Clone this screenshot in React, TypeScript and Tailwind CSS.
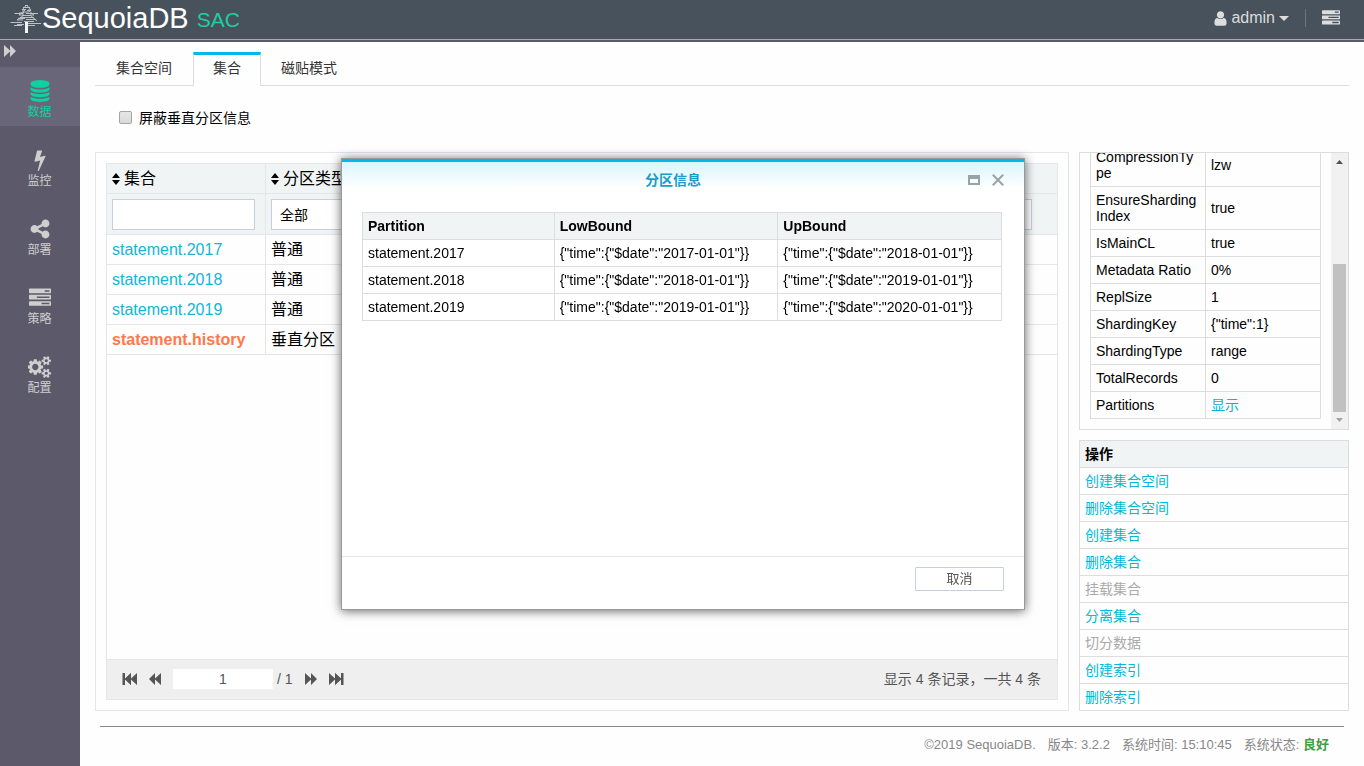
import { useLayoutEffect, useRef, type ReactNode } from "react";

const ICONS = {
  database: {
    w: 1792,
    d: "M896 768q237 0 443-43t325-127v170q0 69-103 128t-280 93.5-385 34.5-385-34.5-280-93.5-103-128v-170q119 84 325 127t443 43zm0 768q237 0 443-43t325-127v170q0 69-103 128t-280 93.5-385 34.5-385-34.5-280-93.5-103-128v-170q119 84 325 127t443 43zm0-384q237 0 443-43t325-127v170q0 69-103 128t-280 93.5-385 34.5-385-34.5-280-93.5-103-128v-170q119 84 325 127t443 43zm0-1152q208 0 385 34.5t280 93.5 103 128v128q0 69-103 128t-280 93.5-385 34.5-385-34.5-280-93.5-103-128v-128q0-69 103-128t280-93.5 385-34.5z",
  },
  bolt: {
    w: 1792,
    d: "M1333 566q18 20 7 44l-540 1157q-13 25-42 25-4 0-14-2-17-5-25.5-19t-4.5-30l197-808-406 101q-4 1-12 1-18 0-31-11-18-15-13-39l201-825q4-14 16-23t28-9h328q19 0 32 12.5t13 29.5q0 8-5 18l-171 463 396-98q8-2 12-2 19 0 34 15z",
  },
  share: {
    w: 1792,
    d: "M1344 1024q133 0 226.5 93.5t93.5 226.5-93.5 226.5-226.5 93.5-226.5-93.5-93.5-226.5q0-12 2-34l-360-180q-92 86-218 86-133 0-226.5-93.5t-93.5-226.5 93.5-226.5 226.5-93.5q126 0 218 86l360-180q-2-22-2-34 0-133 93.5-226.5t226.5-93.5 226.5 93.5 93.5 226.5-93.5 226.5-226.5 93.5q-126 0-218-86l-360 180q2 22 2 34t-2 34l360 180q92-86 218-86z",
  },
  tasks: {
    w: 1792,
    d: "M1024 1408h640v-128h-640v128zm-384-512h1024v-128h-1024v128zm640-512h384v-128h-384v128zm512 832v256q0 26-19 45t-45 19h-1664q-26 0-45-19t-19-45v-256q0-26 19-45t45-19h1664q26 0 45 19t19 45zm0-512v256q0 26-19 45t-45 19h-1664q-26 0-45-19t-19-45v-256q0-26 19-45t45-19h1664q26 0 45 19t19 45zm0-512v256q0 26-19 45t-45 19h-1664q-26 0-45-19t-19-45v-256q0-26 19-45t45-19h1664q26 0 45 19t19 45z",
  },
  cogs: {
    w: 1920,
    d: "M832 896q0-106-75-181t-181-75-181 75-75 181 75 181 181 75 181-75 75-181zm768 512q0-52-38-90t-90-38-90 38-38 90q0 53 37.5 90.5t90.5 37.5 90.5-37.5 37.5-90.5zm0-1024q0-52-38-90t-90-38-90 38-38 90q0 53 37.5 90.5t90.5 37.5 90.5-37.5 37.5-90.5zm-384 421v185q0 10-7 19.5t-16 10.5l-155 24q-11 35-32 76 34 48 90 115 7 11 7 20 0 12-7 19-23 30-82.5 89.5t-78.5 59.5q-11 0-21-7l-115-90q-37 19-77 31-11 108-23 155-7 24-30 24h-186q-11 0-20-7.5t-10-17.5l-23-153q-34-10-75-31l-118 89q-7 7-20 7-11 0-21-8-144-133-144-160 0-9 7-19 10-14 41-53t47-61q-23-44-35-82l-152-24q-10-1-17-9.5t-7-19.5v-185q0-10 7-19.5t16-10.5l155-24q11-35 32-76-34-48-90-115-7-11-7-20 0-12 7-20 22-30 82-89t79-59q11 0 21 7l115 90q34-18 77-32 11-108 23-154 7-24 30-24h186q11 0 20 7.5t10 17.5l23 153q34 10 75 31l118-89q8-7 20-7 11 0 21 8 144 133 144 160 0 8-7 19-12 16-42 54t-45 60q23 48 34 82l152 23q10 2 17 10.5t7 19.5zm640 533v140q0 16-149 31-12 27-30 52 51 113 51 138 0 4-4 7-122 71-124 71-8 0-46-47t-52-68q-20 2-30 2t-30-2q-14 21-52 68t-46 47q-2 0-124-71-4-3-4-7 0-25 51-138-18-25-30-52-149-15-149-31v-140q0-16 149-31 13-29 30-52-51-113-51-138 0-4 4-7 4-2 35-20t59-34 30-16q8 0 46 46.5t52 67.5q20-2 30-2t30 2q51-71 92-112l6-2q4 0 124 70 4 3 4 7 0 25-51 138 17 23 30 52 149 15 149 31zm0-1024v140q0 16-149 31-12 27-30 52 51 113 51 138 0 4-4 7-122 71-124 71-8 0-46-47t-52-68q-20 2-30 2t-30-2q-14 21-52 68t-46 47q-2 0-124-71-4-3-4-7 0-25 51-138-18-25-30-52-149-15-149-31v-140q0-16 149-31 13-29 30-52-51-113-51-138 0-4 4-7 4-2 35-20t59-34 30-16q8 0 46 46.5t52 67.5q20-2 30-2t30 2q51-71 92-112l6-2q4 0 124 70 4 3 4 7 0 25-51 138 17 23 30 52 149 15 149 31z",
  },
  user: {
    w: 1792,
    d: "M1536 1399q0 109-62.5 187t-150.5 78h-854q-88 0-150.5-78t-62.5-187q0-85 8.5-160.5t31.5-152 58.5-131 94-89 134.5-34.5q131 128 313 128t313-128q76 0 134.5 34.5t94 89 58.5 131 31.5 152 8.5 160.5zm-256-887q0 159-112.5 271.5t-271.5 112.5-271.5-112.5-112.5-271.5 112.5-271.5 271.5-112.5 271.5 112.5 112.5 271.5z",
  },
};

function Icon({ name, className }: { name: keyof typeof ICONS; className: string }) {
  const { w, d } = ICONS[name];
  return (
    <svg viewBox={`0 0 ${w} 1792`} fill="currentColor" className={className} aria-hidden="true">
      <path d={d} />
    </svg>
  );
}

function Forward({ end = false, back = false, className = "h-3" }: { end?: boolean; back?: boolean; className?: string }) {
  return (
    <svg
      viewBox={end ? "0 0 15 12" : "0 0 12 12"}
      fill="currentColor"
      aria-hidden="true"
      className={`${className} ${back ? "-scale-x-100" : ""}`}
    >
      <path d="M0 0L6 5.6V0L12 6L6 12V6.4L0 12Z" />
      {end && <path d="M6 0L12 5.5V0H14.500V12H12V6.500L6 12Z" />}
    </svg>
  );
}

function Logo() {
  return (
    <svg viewBox="0 0 32 30" className="h-[30px] w-8" stroke="#bcc2c6" fill="none" aria-hidden="true">
      <path
        strokeWidth="1.2"
        d="M15 2.500H18M13 4.500H20M12 6.500H16M17 7.500H21M9 10H14M13 9H19M16 10.500H28M4.500 10.500H13M12 12.500H21M11 14.500H24M8 15.500H15M7 17H13M16 16.500H26M14 18.500H24M0.500 19.500H12M17 20.500H31M7 21.500H14M4 22.500H12M18 22.500H25"
      />
      <path strokeWidth="1" d="M16.500 2L12 7L15 7L9 12H14L7 17M16.500 2L21 7H18L24 12H20L27 18" />
      <path d="M16.500 19V30" stroke="#f4f4f4" strokeWidth="3" />
    </svg>
  );
}

function SortIcon() {
  return (
    <svg viewBox="0 0 8 12" className="h-3 w-2 shrink-0" aria-hidden="true">
      <path d="M4 0L8 5H0ZM4 12L0 7H8Z" />
    </svg>
  );
}

const nav: { icon: keyof typeof ICONS; label: string }[] = [
  { icon: "database", label: "数据" },
  { icon: "bolt", label: "监控" },
  { icon: "share", label: "部署" },
  { icon: "tasks", label: "策略" },
  { icon: "cogs", label: "配置" },
];

const collections = [
  ["statement.2017", "普通"],
  ["statement.2018", "普通"],
  ["statement.2019", "普通"],
  ["statement.history", "垂直分区"],
];

const details: [ReactNode, ReactNode][] = [
  [<>CompressionTy<wbr />pe</>, "lzw"],
  [<>EnsureSharding<wbr />Index</>, "true"],
  ["IsMainCL", "true"],
  ["Metadata Ratio", "0%"],
  ["ReplSize", "1"],
  ["ShardingKey", '{"time":1}'],
  ["ShardingType", "range"],
  ["TotalRecords", "0"],
  ["Partitions", <a href="#partitions" className="text-[#00b5d8]">显示</a>],
];

const actions: [string, boolean][] = [
  ["创建集合空间", true],
  ["删除集合空间", true],
  ["创建集合", true],
  ["删除集合", true],
  ["挂载集合", false],
  ["分离集合", true],
  ["切分数据", false],
  ["创建索引", true],
  ["删除索引", true],
];

const partitions = [2017, 2018, 2019].map((year) => [
  `statement.${year}`,
  `{"time":{"$date":"${year}-01-01"}}`,
  `{"time":{"$date":"${year + 1}-01-01"}}`,
]);

function Header() {
  return (
    <header className="flex h-[42px] shrink-0 items-center justify-between border-b-2 border-[#5b596a] bg-[#47525d] shadow-[inset_0_-1px_0_#a9a9b2]">
      <div className="flex items-center pb-1 pl-2.5">
        <Logo />
        <span className="text-[29px] leading-8 text-white">SequoiaDB</span>
        <span className="pl-2 pt-1 text-[21px] leading-8 text-[#1dcf9f]">SAC</span>
      </div>
      <div className="flex items-center pb-1 pr-6 text-[#dddddd]">
        <button type="button" className="flex items-center">
          <Icon name="user" className="mr-0.5 h-[17px] w-[17px]" />
          <span className="text-base leading-5">admin</span>
          <svg viewBox="0 0 10 5" fill="currentColor" className="ml-1 h-[5px] w-2.5" aria-hidden="true">
            <path d="M0 0H10L5 5Z" />
          </svg>
        </button>
        <span className="mx-4 h-[18px] w-px bg-[#6d7680]" />
        <button type="button" aria-label="任务">
          <Icon name="tasks" className="h-[18px] w-[18px]" />
        </button>
      </div>
    </header>
  );
}

function Sidebar() {
  return (
    <nav className="w-20 shrink-0 bg-[#5b596a] text-[#cfcfcf]">
      <button type="button" aria-label="展开" className="flex h-[25px] w-full items-start pl-1 pt-[3px]">
        <Forward className="h-3" />
      </button>
      <ul className="flex flex-col gap-2.5">
        {nav.map(({ icon, label }, i) => (
          <li key={label}>
            <a
              href={`#${icon}`}
              className={`flex h-[59px] flex-col items-center pt-[13px] pr-px text-xs leading-4 ${i === 0 ? "bg-[#686678] text-[#0fd0a0]" : ""}`}
            >
              <Icon name={icon} className={icon === "cogs" ? "h-[22px] w-6" : "h-[22px] w-[22px]"} />
              <span className="pt-0.5">{label}</span>
            </a>
          </li>
        ))}
      </ul>
    </nav>
  );
}

function Tabs() {
  const side = "border-b border-t-[3px] border-b-[#dddddd] border-t-transparent px-5";
  return (
    <div className="flex h-[34px] shrink-0 text-sm leading-[30px] text-[#333333]">
      <button type="button" className={`${side} w-[98px]`}>
        <span className="block pb-1 leading-[26px]">集合空间</span>
      </button>
      <button type="button" className="w-[68px] border-x border-t-[3px] border-x-[#dddddd] border-t-[#00b9e9]">
        <span className="block pb-[5px] leading-[26px]">集合</span>
      </button>
      <button type="button" className={side}>
        <span className="block pb-1 leading-[26px]">磁贴模式</span>
      </button>
      <div className="flex-1 border-b border-[#dddddd]" />
    </div>
  );
}

function CollectionPanel() {
  return (
    <section className="flex min-w-0 flex-1 flex-col border border-[#e3e7e8] p-2.5">
      <div className="flex min-h-0 flex-1 flex-col border border-[#e3e7e8]">
        <table className="w-full table-fixed border-separate border-spacing-0 text-base">
          <colgroup>
            <col className="w-[159px]" />
            <col />
          </colgroup>
          <thead className="bg-[#f0f4f5] text-left">
            <tr className="h-[30px]">
              {["集合", "分区类型"].map((title, i) => (
                <th key={title} className={`border-b border-[#e3e7e8] p-0 pl-[5px] font-normal ${i === 0 ? "border-r" : ""}`}>
                  <span className="flex items-center gap-1 leading-6">
                    <SortIcon />
                    {title}
                  </span>
                </th>
              ))}
            </tr>
            <tr className="h-[41px]">
              <td className="border-b border-r border-[#e3e7e8] p-0 pl-[5px] pr-2.5">
                <input aria-label="集合" className="block h-[31px] w-full border border-[#c5d0dc] bg-white px-2 text-sm" />
              </td>
              <td className="border-b border-[#e3e7e8] p-0 pl-[5px] pr-[25px]">
                <select aria-label="分区类型" className="block h-[31px] w-full appearance-none border border-[#c5d0dc] bg-white px-2 pt-0.5 text-sm">
                  <option>全部</option>
                </select>
              </td>
            </tr>
          </thead>
          <tbody>
            {collections.map(([name, type]) => (
              <tr key={name} className="h-[30px]">
                <td className="border-b border-r border-[#e3e7e8] p-0 pl-[5px] leading-6">
                  <a href={`#${name}`} className={name.endsWith("history") ? "font-bold text-[#ff7849]" : "text-[#13b5d6]"}>
                    {name}
                  </a>
                </td>
                <td className="border-b border-[#e3e7e8] p-0 pl-[5px] leading-6">{type}</td>
              </tr>
            ))}
          </tbody>
        </table>
        <div className="mt-auto flex h-10 items-center justify-between border-t border-[#e3e7e8] bg-[#efefef] pb-0.5 pl-[15px] pr-4 text-sm text-[#555555]">
          <div className="flex items-center">
            <button type="button" aria-label="首页"><Forward end back /></button>
            <button type="button" aria-label="上一页" className="ml-3"><Forward back /></button>
            <input aria-label="页码" defaultValue="1" className="ml-3 h-5 w-[100px] bg-white text-center" />
            <span className="px-1">/ 1</span>
            <button type="button" aria-label="下一页" className="ml-2"><Forward /></button>
            <button type="button" aria-label="末页" className="ml-3"><Forward end /></button>
          </div>
          <span>显示 4 条记录，一共 4 条</span>
        </div>
      </div>
    </section>
  );
}

function DetailPanel() {
  const box = useRef<HTMLDivElement>(null);
  useLayoutEffect(() => {
    if (box.current) box.current.scrollTop = box.current.scrollHeight;
  }, []);
  return (
    <section className="flex min-h-0 flex-1 border border-[#dddddd]">
      <div ref={box} className="min-w-0 flex-1 overflow-y-auto p-2.5 [scrollbar-width:none]">
        <table className="w-full table-fixed border-collapse text-sm leading-4">
          <tbody>
            {details.map(([key, value], i) => (
              <tr key={i} className="h-[27px]">
                <th scope="row" className="border border-[#dddddd] px-[5px] py-[5px] text-left font-normal">{key}</th>
                <td className="border border-[#dddddd] px-[5px] py-0">{value}</td>
              </tr>
            ))}
          </tbody>
        </table>
      </div>
      <div className="flex w-[17px] flex-col items-center bg-[#f1f1f1]" aria-hidden="true">
        <svg viewBox="0 0 17 17" className="h-[17px] w-[17px] shrink-0"><path d="M5 11L8.500 7L12 11Z" fill="#505050" /></svg>
        <div className="flex w-[13px] flex-1 flex-col justify-end">
          <div className="h-[61%] bg-[#c1c1c1]" />
        </div>
        <svg viewBox="0 0 17 17" className="h-[17px] w-[17px] shrink-0"><path d="M5 6L8.500 10L12 6Z" fill="#a3a3a3" /></svg>
      </div>
    </section>
  );
}

function ActionPanel() {
  return (
    <section className="shrink-0 border border-[#dddddd] text-sm leading-[26px]">
      <h2 className="bg-[#f0f4f5] px-[5px] font-bold">操作</h2>
      <ul>
        {actions.map(([label, enabled]) => (
          <li key={label} className="flex border-t border-[#dddddd] px-[5px]">
            <button type="button" disabled={!enabled} className={enabled ? "text-[#00b9d9]" : "text-[#aaaaaa]"}>
              {label}
            </button>
          </li>
        ))}
      </ul>
    </section>
  );
}

function PartitionDialog() {
  return (
    <div className="pointer-events-none fixed inset-0 flex items-center justify-center pl-0.5 pt-0.5">
      <div
        role="dialog"
        aria-labelledby="dialog-title"
        className="pointer-events-auto flex h-[452px] w-[684px] max-w-full flex-col border border-[#999999] bg-white shadow-[0_1px_10px_rgba(0,0,0,0.6)]"
      >
        <div className="flex h-[38px] shrink-0 items-center border-t-[3px] border-[#00b9e9] bg-linear-to-b from-[#d8f5fc] to-white to-75% pr-5">
          <span className="w-10" />
          <h2 id="dialog-title" className="flex-1 text-center text-sm leading-5 font-bold text-[#1b9cc9]">分区信息</h2>
          <div className="flex w-10 items-center justify-end gap-3 text-[#98a3a8]">
            <button type="button" aria-label="最大化">
              <svg viewBox="0 0 12 10" className="h-2.5 w-3" aria-hidden="true">
                <path d="M0 0H12V10H0ZM2 4V8H10V4Z" fill="currentColor" fillRule="evenodd" />
              </svg>
            </button>
            <button type="button" aria-label="关闭">
              <svg viewBox="0 0 12 12" className="h-3 w-3" stroke="currentColor" strokeWidth="2" aria-hidden="true">
                <path d="M0.800 0.800L11.200 11.200M11.200 0.800L0.800 11.200" />
              </svg>
            </button>
          </div>
        </div>
        <div className="min-h-0 flex-1 px-5 pt-[15px]">
          <table className="w-[640px] max-w-full table-fixed border-collapse text-sm leading-4">
            <colgroup>
              <col className="w-[30%]" />
              <col className="w-[35%]" />
              <col className="w-[35%]" />
            </colgroup>
            <thead className="bg-[#f0f4f5] text-left">
              <tr className="h-[27px]">
                {["Partition", "LowBound", "UpBound"].map((title) => (
                  <th key={title} className="border border-[#dddddd] px-[5px] py-0 font-bold">{title}</th>
                ))}
              </tr>
            </thead>
            <tbody>
              {partitions.map((row) => (
                <tr key={row[0]} className="h-[27px]">
                  {row.map((cell, i) => (
                    <td key={i} className="border border-[#dddddd] px-[5px] py-0">{cell}</td>
                  ))}
                </tr>
              ))}
            </tbody>
          </table>
        </div>
        <div className="flex h-[53px] shrink-0 justify-end border-t border-[#e3e7e8] px-5 pt-2.5">
          <button type="button" className="h-6 w-[89px] rounded-[1px] border border-[#c5d0dc] bg-white text-[13px] leading-[22px] text-[#555555]">
            取消
          </button>
        </div>
      </div>
    </div>
  );
}

export default function App() {
  return (
    <div className="flex h-screen flex-col bg-[#fefefe] font-['Liberation_Sans','Noto_Sans_CJK_SC',sans-serif] text-black">
      <Header />
      <div className="flex min-h-0 flex-1">
        <Sidebar />
        <main className="flex min-w-0 flex-1 flex-col px-[15px] pt-2.5">
          <Tabs />
          <div className="flex h-[66px] shrink-0 items-center pb-1 pl-6">
            <input
              id="hide-sub"
              type="checkbox"
              className="h-[13px] w-[13px] appearance-none rounded-[2px] border border-[#a5a5a5] bg-linear-to-b from-[#e6e6e6] to-[#dadada] checked:bg-[#00b9e9]"
            />
            <label htmlFor="hide-sub" className="pl-[7px] pt-0.5 text-sm leading-5">屏蔽垂直分区信息</label>
          </div>
          <div className="flex min-h-0 flex-1 gap-2.5">
            <CollectionPanel />
            <aside className="flex w-[270px] shrink-0 flex-col gap-2.5">
              <DetailPanel />
              <ActionPanel />
            </aside>
          </div>
          <footer className="mx-[5px] mt-[15px] flex h-10 shrink-0 justify-end gap-3 border-t border-[#888888] pr-[15px] text-[13px] leading-9 text-[#888888]">
            <span>©2019 SequoiaDB.</span>
            <span>版本: 3.2.2</span>
            <span>系统时间: 15:10:45</span>
            <span>系统状态: <b className="text-[#3fa045]">良好</b></span>
          </footer>
        </main>
      </div>
      <PartitionDialog />
    </div>
  );
}
